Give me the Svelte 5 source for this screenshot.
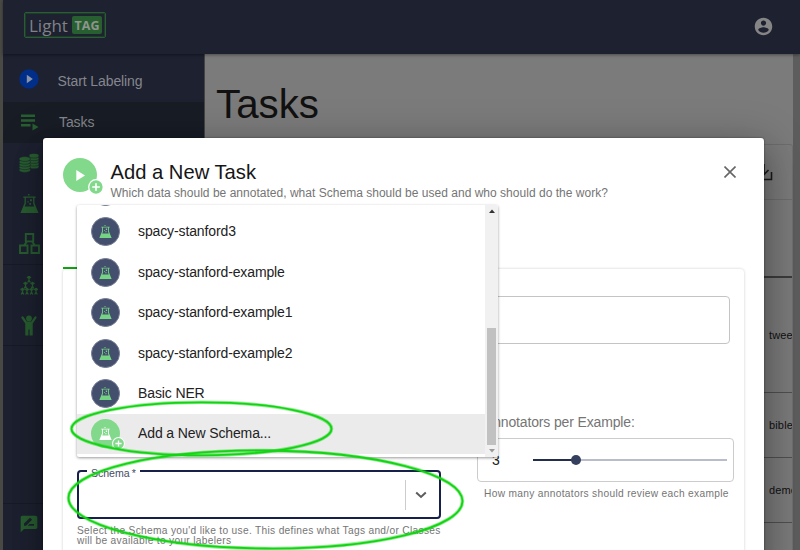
<script>
  const schemas = ['spacy-stanford3', 'spacy-stanford-example', 'spacy-stanford-example1', 'spacy-stanford-example2', 'Basic NER'];
  const rows = [
    { name: 'twee', height: 115 },
    { name: 'bible', height: 65 },
    { name: 'demo', height: 65 },
    { name: '', height: 65 }
  ];
</script>

{#snippet flask(size, color)}
  <svg width={size} height={size} viewBox="0 0 20 20" fill={color}>
    <path d="M3.500 2.500h13V4h-1.300v5.500L19.500 20H.5L4.800 9.500V4H3.500z M6.200 4v6L5 13.200h10L13.800 10V4z" fill-rule="evenodd" />
    <path d="M8.500 0h1.500v1.500H8.500z M10.500 5.500h2v2h-2z M7.800 7.500h1.500V9H7.800z M9.800 9.500h1.800v1.800H9.800z" />
  </svg>
{/snippet}

{#snippet plusBadge()}
  <svg class="badge" viewBox="0 0 16 16">
    <circle cx="8" cy="8" r="7.300" fill="#82d98b" stroke="#fff" stroke-width="1.300" />
    <path d="M8 4.200v7.600M4.200 8h7.600" stroke="#fff" stroke-width="1.700" />
  </svg>
{/snippet}

<div class="app">
  <header>
    <div class="logo"><span>Light</span><b>TAG</b></div>
    <svg class="user" width="21" height="21" viewBox="0 0 24 24" fill="#858585">
      <path d="M12 2C6.480 2 2 6.480 2 12s4.480 10 10 10 10-4.480 10-10S17.520 2 12 2zm0 3c1.660 0 3 1.340 3 3s-1.340 3-3 3-3-1.340-3-3 1.340-3 3-3zm0 14.200c-2.500 0-4.710-1.280-6-3.220.030-1.990 4-3.080 6-3.080 1.990 0 5.970 1.090 6 3.080-1.290 1.940-3.500 3.220-6 3.220z" />
    </svg>
  </header>

  <div class="body">
    <nav>
      <div class="item start">
        <span class="ico">
          <svg width="20" height="20" viewBox="0 0 20 20"><circle cx="10" cy="10" r="9.700" fill="#002e88" /><path d="M7.800 5.800v8.400l6-4.200z" fill="#8a94a8" /></svg>
        </span>
        <span>Start Labeling</span>
      </div>
      <div class="item active">
        <span class="ico">
          <svg width="20" height="18" viewBox="0 0 20 18" fill="#285f30"><path d="M2 1.500h14v2.500H2zM2 6.200h14v2.500H2zM2 11h9.500v2.500H2zM13.500 10.500v7l6-3.500z" /></svg>
        </span>
        <span>Tasks</span>
      </div>
      <div class="item">
        <span class="ico">
          <svg width="20" height="20" viewBox="0 0 20 20" fill="#285f30" stroke="#1d2030" stroke-width=".5">
            {#each [13.500, 10.800, 8.100, 5.400, 2.700] as y}<ellipse cx="15" cy={y} rx="5" ry="2.300" />{/each}
            {#each [17, 14.300, 11.600, 8.900, 6] as y}<ellipse cx="5.800" cy={y} rx="5.800" ry="2.400" />{/each}
          </svg>
        </span>
      </div>
      <div class="item"><span class="ico">{@render flask(19, '#285f30')}</span></div>
      <div class="item line">
        <span class="ico">
          <svg width="21" height="21" viewBox="0 0 21 21" fill="none" stroke="#285f30" stroke-width="1.900"><path d="M6.800 1h7.400v7.400H6.800zM1 12.500h7.500V20H1zM12.500 12.500H20V20h-7.500zM8 8.500l-3 4M13 8.500l3 4" /></svg>
        </span>
      </div>
      <div class="item">
        <span class="ico">
          <svg width="18" height="19" viewBox="0 0 18 19" fill="none" stroke="#285f30" stroke-width="1.200">
            {#each [[9, 1], [5.500, 7], [12.500, 7], [2.500, 13], [7, 13], [11.500, 13], [16, 13]] as [x, y]}
              <circle cx={x} cy={y} r=".7" fill="#285f30" /><path d="M{x - 2} {y}l2 1.500 2-1.500M{x} {y + 1}v2l-1.300 2.500M{x} {y + 3}l1.300 2.500" />
            {/each}
          </svg>
        </span>
      </div>
      <div class="item line">
        <span class="ico">
          <svg width="16" height="21" viewBox="0 0 16 21"><circle cx="8" cy="3.400" r="2.900" fill="#285f30" /><path d="M1.500 2.500l3.500 5h6l3.500-5" fill="none" stroke="#285f30" stroke-width="2.200" stroke-linecap="round" stroke-linejoin="round" /><path d="M4.300 7h7.400v13.500H8.600v-6H7.400v6H4.300z" fill="#285f30" /></svg>
        </span>
      </div>
      <div class="item last">
        <span class="ico">
          <svg width="20" height="20" viewBox="0 0 24 24" fill="#285f30"><path d="M20 2H4c-1.100 0-1.990.900-1.990 2L2 22l4-4h14c1.100 0 2-.900 2-2V4c0-1.100-.900-2-2-2zM6 14v-2.470l6.880-6.880c.200-.200.510-.200.710 0l1.770 1.770c.200.200.200.510 0 .710L8.470 14H6zm12 0h-7.500l2-2H18v2z" /></svg>
        </span>
      </div>
    </nav>

    <main>
      <h1>Tasks</h1>
      <section class="table">
        <div class="tools">
          <svg width="20" height="20" viewBox="0 0 20 20" fill="none" stroke="#1b1b1b" stroke-width="1.600"><path d="M10 2v10M5.500 8l4.500 4.500L14.500 8M2 10v7.500h15.500V10" /></svg>
        </div>
        <div class="thead"></div>
        {#each rows as r}<div class="tr" style="height:{r.height}px">{r.name}</div>{/each}
      </section>
    </main>
    <div class="pagebar"></div>
  </div>

  <div class="dialog">
    <div class="dhead">
      <div class="avatar big">
        <svg width="34" height="34" viewBox="0 0 34 34"><circle cx="17" cy="17" r="17" fill="#82d98b" /><path d="M13.300 12v11l8.700-5.500z" fill="#fff" /></svg>
        {@render plusBadge()}
      </div>
      <div class="titles">
        <h2>Add a New Task</h2>
        <p>Which data should be annotated, what Schema should be used and who should do the work?</p>
      </div>
      <svg class="close" width="12" height="12" viewBox="0 0 12 12" stroke="#666" stroke-width="1.600"><path d="M.5.5l11 11M11.500.5l-11 11" /></svg>
    </div>
    <div class="tab"></div>
    <div class="panel">
      <div class="col left">
        <div class="field">
          <span class="label">Schema&#8201;*</span>
          <i class="divider"></i>
          <svg class="chev" width="12" height="8" viewBox="0 0 12 8" fill="none" stroke="#5c5c5c" stroke-width="2"><path d="M1.200 1.500L6 6l4.800-4.500" /></svg>
        </div>
        <p class="help">Select the Schema you'd like to use. This defines what Tags and/or Classes<br />will be available to your labelers</p>
      </div>
      <div class="col right">
        <div class="box"></div>
        <div class="ann">Annotators per Example:</div>
        <div class="slider">
          <span>3</span>
          <svg width="196" height="14" viewBox="0 0 196 14"><path d="M1 7h194" stroke="#b9bccb" stroke-width="2" /><path d="M1 7h43" stroke="#232d4d" stroke-width="2" /><circle cx="44" cy="7" r="5" fill="#35405f" /></svg>
        </div>
        <p class="help second">How many annotators should review each example</p>
      </div>
    </div>
  </div>

  <div class="menu">
    <div class="options">
      <div class="opt peek"><span class="avatar navy"></span></div>
      {#each schemas as s}
        <div class="opt"><span class="avatar navy">{@render flask(13, '#74d484')}</span>{s}</div>
      {/each}
      <div class="opt selected">
        <span class="avatar green">{@render flask(13, '#fff')}{@render plusBadge()}</span>Add a New Schema...
      </div>
    </div>
    <div class="bar">
      <svg width="8" height="4" viewBox="0 0 8 4"><path d="M1 4l3-3.500L7 4z" fill="#333" /></svg>
      <div class="thumb"></div>
      <svg width="8" height="4" viewBox="0 0 8 4"><path d="M1 0l3 3.500L7 0z" fill="#999" /></svg>
    </div>
  </div>

  <svg class="marks" width="800" height="550" viewBox="0 0 800 550" fill="none">
    {#each [[3.600, 0.45], [1.800, 1]] as [w, o]}
      <g stroke="#12d412" stroke-width={w} stroke-opacity={o}>
        <ellipse cx="201.500" cy="428.800" rx="130" ry="26.500" />
        <ellipse cx="265.500" cy="499.500" rx="197" ry="49" transform="rotate(.5 265.500 499.500)" />
      </g>
    {/each}
  </svg>
</div>

<style>
  .app { position: relative; width: 800px; height: 550px; overflow: hidden; background: #4a4a44; font-family: 'Liberation Sans', Arial, sans-serif; display: flex; flex-direction: column; }
  .app :global(*) { box-sizing: border-box; }
  h1, h2, p { margin: 0; font-weight: 400; }
  header { height: 54px; flex: none; margin-left: 3px; background: #1d2130; display: flex; align-items: center; justify-content: space-between; padding: 0 26px 4px 21px; box-shadow: 0 1px 3px #0006; z-index: 1; }
  .user { margin-top: 3px; }
  .logo { width: 82px; height: 26px; outline: 1px solid #285f3066; outline-offset: -2px; border: 1px solid #285f30; border-radius: 2px; display: flex; align-items: center; gap: 4px; padding-left: 4px; font: 17px 'Open Sans', sans-serif; color: #808288; }
  .logo span { width: 39px; }
  .logo b { background: #285f30; border-radius: 2px; width: 30px; height: 18px; font: 700 12.500px/19px 'Open Sans', sans-serif; text-align: center; color: #8d958e; }
  .body { flex: 1; display: flex; min-height: 0; margin-left: 3px; }
  nav { width: 202px; flex: none; background: #1d2130; display: flex; flex-direction: column; border-right: 1px solid #444; }
  .item { height: 40.700px; flex: none; display: flex; align-items: center; gap: 18px; padding-left: 15px; font-size: 14px; letter-spacing: -.1px; color: #85878d; }
  .ico { width: 22px; display: flex; justify-content: center; align-items: center; }
  .start { height: 48px; padding-top: 6px; padding-bottom: 0; gap: 17.500px; }
  .start .ico { padding-bottom: 4px; }
  .active { background: #181c25; gap: 19px; }
  .line { border-bottom: 1px solid #181b27; }
  .last { margin-top: auto; height: 47px; border-top: 1px solid #181b27; padding-bottom: 6px; }
  main { flex: 1; background: #7b7b7b; padding-left: 11px; min-width: 0; }
  h1 { font-size: 40.300px; line-height: 46px; padding-top: 28px; height: 90px; color: #111; }
  .table { height: 420px; background: #7b7b7b; border-top: 1px solid #6d6d6d; border-right: 1px solid #707070; border-radius: 3px; }
  .tools { height: 55px; border-bottom: 1px solid #6d6d6d; display: flex; align-items: center; justify-content: flex-end; padding-right: 18px; }
  .thead { height: 78px; border-bottom: 2px solid #3c3c3c; }
  .tr { border-bottom: 1px solid #505050; padding-left: 553px; font-size: 11px; letter-spacing: .15px; color: #111; display: flex; align-items: center; overflow: hidden; }
  .pagebar { width: 7px; background: #5d5d5d; }
  .dialog { position: absolute; left: 43px; top: 138px; width: 721px; height: 440px; background: #fff; border-radius: 3px; padding: 20px 20px 0; box-shadow: 0 9px 13px -6px rgba(0,0,0,.2), 0 20px 32px 2px rgba(0,0,0,.14), 0 8px 40px 6px rgba(0,0,0,.22), 0 0 2px #0008; display: flex; flex-direction: column; }
  .dhead { display: flex; height: 109px; flex: none; align-items: flex-start; }
  .avatar { position: relative; flex: none; display: flex; align-items: center; justify-content: center; border-radius: 50%; }
  .big { width: 34px; height: 34px; }
  .avatar :global(.badge) { position: absolute; width: 13px; height: 13px; left: 21px; top: 18px; }
  .big :global(.badge) { width: 16px; height: 16px; left: 25px; top: 21px; }
  .titles { padding-left: 13.500px; flex: 1; }
  h2 { font-size: 20.200px; line-height: 26px; letter-spacing: 0; color: #161616; margin-top: 1px; }
  .titles p { font-size: 12px; line-height: 16px; letter-spacing: .02px; color: #757575; white-space: nowrap; }
  .close { margin: 8px 8px 0 0; }
  .tab { height: 2px; width: 150px; background: #12a912; flex: none; }
  .panel { width: 681px; flex: 1; border-radius: 4px; box-shadow: 0 0 3px #0003; display: flex; justify-content: space-between; }
  .left { width: 378px; padding: 201px 0 0 14px; }
  .field { position: relative; width: 364px; height: 49px; border: 2px solid #17204a; border-radius: 4px; display: flex; align-items: center; justify-content: flex-end; padding-right: 12px; }
  .label { position: absolute; left: 8px; top: -5px; padding: 0 4px 0 4px; background: #fff; font-size: 10.600px; line-height: 12px; letter-spacing: -.05px; color: #454b66; }
  .divider { width: 1px; height: 30px; background: #ccc; margin-right: 9px; }
  .chev { margin-top: 1px; }
  .help { font-size: 10.200px; line-height: 10.200px; letter-spacing: .31px; color: #757575; white-space: nowrap; padding-top: 7px; }
  .right { width: 267px; padding-top: 27px; }
  .box { width: 253px; height: 48px; border: 1px solid #c4c4c4; border-radius: 4px; }
  .ann { font-size: 14px; line-height: 18px; letter-spacing: -.15px; color: #757575; margin: 69px 0 7px 7px; white-space: nowrap; }
  .slider { width: 257px; height: 44px; border: 1px solid #ccc; border-radius: 4px; display: flex; align-items: center; justify-content: space-between; padding: 0 5px 0 14px; font-size: 14px; color: #222; }
  .second { padding-left: 7px; }
  .menu { position: absolute; left: 77px; top: 205px; width: 421px; height: 252px; background: #fff; border-radius: 2px; box-shadow: 0 1px 3px #0006; display: flex; overflow: hidden; }
  .options { flex: 1; display: flex; flex-direction: column; justify-content: flex-end; padding-bottom: 3px; }
  .opt { height: 40.400px; flex: none; display: flex; align-items: center; padding: 0 0 1px 14px; gap: 18px; font-size: 14px; letter-spacing: -.12px; color: #222; }
  .selected { background: #ebebeb; }
  .navy, .green { width: 29px; height: 29px; }
  .navy { background: #444e6d; border: 1.500px solid #737a91; margin-top: 1px; }
  .green { background: #82d98b; margin-top: 1px; }
  .bar { width: 13px; background: #f1f1f1; display: flex; flex-direction: column; align-items: center; padding: 4px 0; }
  .thumb { width: 9px; height: 117px; background: #c1c1c1; margin: auto 0 4px; }
  .marks { position: absolute; inset: 0; }
</style>
